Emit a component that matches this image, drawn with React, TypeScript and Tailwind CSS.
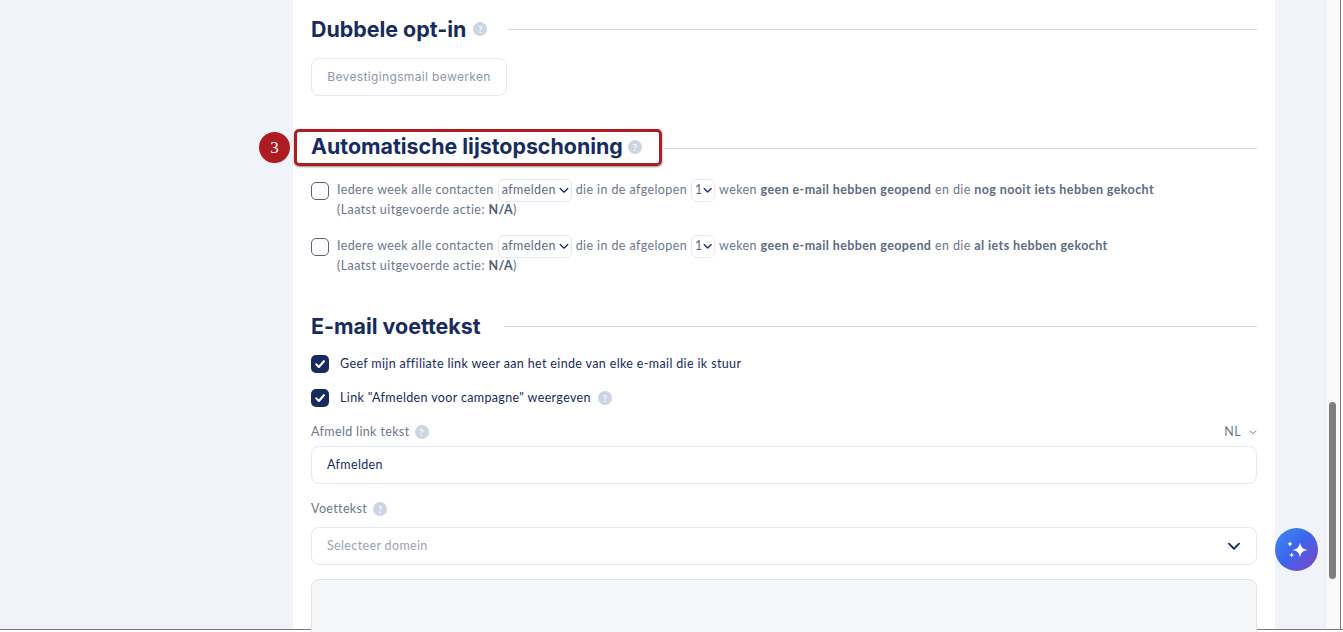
import React from "react";

const body = { fontFamily: '"Lato", "Liberation Sans", sans-serif' };

function Help({ className = "" }: { className?: string }) {
  return (
    <span className={`inline-flex h-[14px] w-[14px] shrink-0 items-center justify-center rounded-full bg-[#cbd5e3] text-[9px] font-bold leading-none text-white ${className}`}>
      ?
    </span>
  );
}

function Chevron({ className = "" }: { className?: string }) {
  return (
    <svg viewBox="0 0 12 8" fill="none" stroke="currentColor" strokeLinecap="round" strokeLinejoin="round" className={className}>
      <path d="M1.5 1.5 6 6l4.5-4.5" strokeWidth="1.6" />
    </svg>
  );
}

function Heading({ title, help, helpGap = "ml-[6px]", lineGap = "ml-[21px]", className = "" }: { title: string; help?: boolean; helpGap?: string; lineGap?: string; className?: string }) {
  return (
    <div className={`flex h-[30px] items-center ${className}`}>
      <h2 className="text-[21.4px] font-bold leading-[30px] text-[#172b5e]" style={{ fontFamily: "Inter, sans-serif" }}>
        {title}
      </h2>
      {help && <Help className={helpGap} />}
      <div className={`h-px flex-1 bg-[#d3d7de] ${lineGap}`} />
    </div>
  );
}

function MiniSelect({ label, width }: { label: string; width: string }) {
  return (
    <span className={`mx-[4px] inline-flex h-[23px] items-center justify-between rounded-[6px] border border-[#e5e8ee] pl-[3px] pr-[2px] align-middle text-[#5d6b82] ${width}`}>
      {label}
      <Chevron className="h-[7px] w-[10px] text-[#172b5e]" />
    </span>
  );
}

function CleanRow({ last }: { last: string }) {
  return (
    <div className="flex items-start">
      <span className="mt-[3px] h-[18px] w-[18px] shrink-0 rounded-[5px] border border-[#55627a] bg-white" />
      <div className="ml-[8px] text-[12.5px] tracking-[0.4px] text-[#6b778c]">
        <div className="flex h-[23px] items-center whitespace-pre">
          Iedere week alle contacten
          <MiniSelect label="afmelden" width="w-[74px]" />
          die in de afgelopen
          <MiniSelect label="1" width="w-[24px]" />
          weken <b className="font-bold text-[#5d6b82]">geen e-mail hebben geopend</b> en die <b className="font-bold text-[#5d6b82]">{last}</b>
        </div>
        <div className="-mt-[1px] leading-[17px]">
          (Laatst uitgevoerde actie: <b className="font-bold text-[#4f5d75]">N/A</b>)
        </div>
      </div>
    </div>
  );
}

function CheckRow({ children }: { children: React.ReactNode }) {
  return (
    <div className="flex h-[18px] items-center text-[12.5px] tracking-[0.36px] text-[#172b5e]">
      <span className="flex h-[18px] w-[18px] shrink-0 items-center justify-center rounded-[5px] bg-[#172b5e]">
        <svg viewBox="0 0 12 12" fill="none" className="h-[12px] w-[12px]" stroke="white" strokeWidth="2.1" strokeLinecap="round" strokeLinejoin="round">
          <path d="M2.2 6.3 4.9 9l5-5.8" />
        </svg>
      </span>
      <span className="ml-[11px] flex items-center">{children}</span>
    </div>
  );
}

export default function App() {
  return (
    <div className="h-[632px] w-[1343px] overflow-hidden bg-white" style={body}>
      <div className="relative flex h-[630px] border-b border-[#77797d]">
        <div className="w-[293px] shrink-0 bg-[#f0f4fa]" />

        <main className="w-[982px] shrink-0 bg-white pl-[18px] pr-[18px] pt-[14px]">
          <Heading title="Dubbele opt-in" help helpGap="ml-[7px]" />
          <button className="mt-[14px] flex h-[38px] w-[196px] items-center justify-center rounded-[8px] border border-[#e5e8ee] text-[12px] tracking-[0.36px] text-[#8d97ad]" style={{ fontFamily: "Inter, sans-serif" }}>
            Bevestigingsmail bewerken
          </button>

          <Heading title="Automatische lijstopschoning" help helpGap="ml-[5px]" lineGap="ml-[22px]" className="mt-[36px] [&>h2]:mb-[2px] [&>div]:mt-[2px]" />
          <div className="mt-[17px] flex flex-col gap-[17px]">
            <CleanRow last="nog nooit iets hebben gekocht" />
            <CleanRow last="al iets hebben gekocht" />
          </div>

          <Heading title="E-mail voettekst" lineGap="ml-[23px]" className="mt-[37px]" />
          <div className="mt-[14px] flex flex-col gap-[16px]">
            <CheckRow>Geef mijn affiliate link weer aan het einde van elke e-mail die ik stuur</CheckRow>
            <CheckRow>
              Link "Afmelden voor campagne" weergeven
              <Help className="ml-[7px]" />
            </CheckRow>
          </div>

          <div className="mt-[16px] flex h-[18px] items-center justify-between text-[12.5px] tracking-[0.36px] text-[#6b778c]">
            <span className="flex items-center">
              Afmeld link tekst
              <Help className="ml-[5px]" />
            </span>
            <span className="flex items-center">
              NL
              <Chevron className="ml-[8px] h-[5px] w-[8px] text-[#6b778c]" />
            </span>
          </div>
          <div className="mt-[5px] flex h-[38px] items-center rounded-[8px] border border-[#e5e8ee] pl-[15px] text-[12.5px] tracking-[0.36px] text-[#172b5e]">
            Afmelden
          </div>

          <div className="mt-[16px] flex h-[18px] items-center text-[12.5px] tracking-[0.36px] text-[#6b778c]">
            Voettekst
            <Help className="ml-[6px]" />
          </div>
          <div className="mt-[9px] flex h-[38px] items-center justify-between rounded-[8px] border border-[#e5e8ee] pl-[15px] pr-[15px] text-[12.5px] tracking-[0.36px] text-[#9aa3b5]">
            Selecteer domein
            <Chevron className="h-[9px] w-[14px] text-[#172b5e]" />
          </div>
          <div className="mt-[14px] h-[60px] rounded-t-[8px] border border-[#e1e4ea] bg-[#f6f7f9]" />
        </main>

        <div className="w-[50px] shrink-0 bg-[#f0f4fa]" />

        <div className="w-[15px] shrink-0 border-l border-[#e8ebf0] bg-[#fafafa] pl-[3px] pt-[402px]">
          <div className="h-[177px] w-[7px] rounded-full bg-[#7e7e7e]" />
        </div>
        <div className="w-px shrink-0 bg-[#77797d]" />

        {/* annotation */}
        <div className="absolute left-[294px] top-[129px] h-[37px] w-[368px] rounded-[5px] border-[3px] border-[#ae1b20] shadow-[0_1px_2px_rgba(0,0,0,0.45)]" />
        <div className="absolute left-[259px] top-[132px] flex h-[31px] w-[31px] items-center justify-center rounded-full bg-[#ae1b20] text-[17px] text-white" style={{ fontFamily: '"Liberation Serif", serif' }}>
          3
        </div>

        {/* assistant */}
        <div className="absolute left-[1275px] top-[528px] flex h-[43px] w-[43px] items-center justify-center rounded-full bg-gradient-to-br from-[#3b8cf5] via-[#3c63ea] to-[#7a3fc8]">
          <svg viewBox="0 0 24 24" className="h-[24px] w-[24px]" fill="white">
            <path d="M15 4.500c.9 4.500 2.500 6.600 7.500 7.500-5 .9-6.600 2.500-7.500 7.500-.9-5-2.500-6.600-7.500-7.500 5-.9 6.600-3 7.500-7.500Z" />
            <path d="M5 3c.4 1.900 1 2.500 2.900 2.900C6 6.300 5.400 6.900 5 8.800 4.600 6.900 4 6.300 2.100 5.900 4 5.500 4.600 4.900 5 3Z" />
            <path d="M6.700 14.200c.4 1.800 1 2.400 2.800 2.800-1.800.4-2.400 1-2.800 2.800-.4-1.800-1-2.400-2.800-2.800 1.800-.4 2.400-1 2.800-2.800Z" />
          </svg>
        </div>
      </div>
    </div>
  );
}
